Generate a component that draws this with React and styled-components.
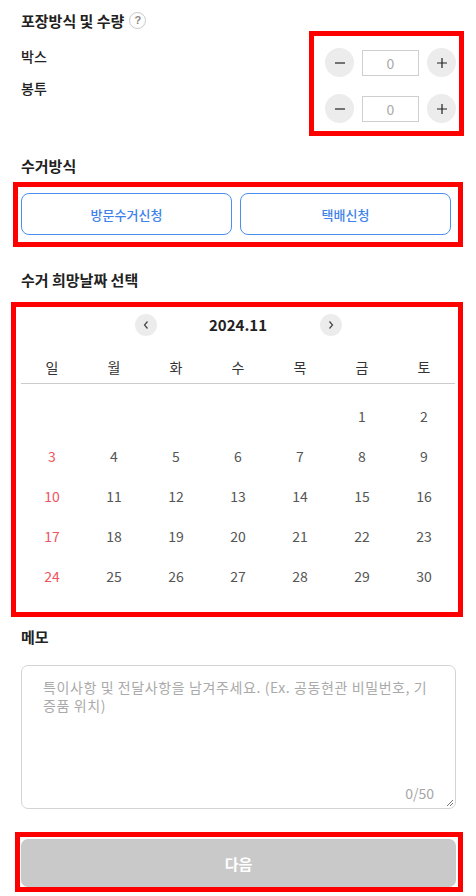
import styled, { createGlobalStyle } from 'styled-components';

const GlobalStyle = createGlobalStyle`
  * { box-sizing: border-box; }
  body {
    margin: 0;
    background: #fff;
    font-family: "Noto Sans CJK KR", "Noto Sans", sans-serif;
    color: #222;
  }
`;

const Page = styled.div`
  width: 476px;
  padding: 10px 20px 0 21px;
`;

const SectionTitle = styled.h3`
  margin: ${(p) => p.$top || 0}px 0 0;
  display: flex;
  align-items: center;
  font-size: 15px;
  font-weight: 700;
  line-height: 21px;
  color: #222;
`;

const HelpIcon = styled.span`
  display: inline-flex;
  align-items: center;
  justify-content: center;
  width: 17px;
  height: 17px;
  margin-left: 5px;
  border: 1px solid #c8c8c8;
  border-radius: 50%;
  font-size: 11px;
  font-weight: 700;
  color: #888;
  font-family: "Liberation Sans", sans-serif;
`;

// red annotation frame drawn around a block
const Highlight = styled.div`
  border: 5px solid #ff0000;
  margin: ${(p) => p.$margin};
  padding: ${(p) => p.$padding};
`;

const QuantityRow = styled.div`
  display: flex;
  justify-content: space-between;
  align-items: flex-start;
`;

const Labels = styled.div`
  display: flex;
  flex-direction: column;
  gap: 12px;
  margin-top: 15px;
`;

const Label = styled.span`
  font-size: 14px;
  font-weight: 500;
  line-height: 20px;
  color: #222;
`;

const Steppers = styled.div`
  display: flex;
  flex-direction: column;
  gap: 17px;
`;

const Stepper = styled.div`
  display: flex;
  align-items: center;
  gap: 8px;
`;

const RoundButton = styled.button`
  width: 29px;
  height: 29px;
  border: none;
  border-radius: 50%;
  background: #ececec;
  display: flex;
  align-items: center;
  justify-content: center;
  padding: 0;
  color: #222;
`;

const CountBox = styled.div`
  width: 57px;
  height: 26px;
  border: 1px solid #cfcfcf;
  display: flex;
  align-items: center;
  justify-content: center;
  font-size: 14px;
  color: #aaa;
`;

const MethodGroup = styled.div`
  display: grid;
  grid-template-columns: 1fr 1fr;
  gap: 8px;
`;

const MethodButton = styled.button`
  height: 42px;
  border: 1px solid #4a8fee;
  border-radius: 8px;
  background: #fff;
  color: #3e83ea;
  font-family: inherit;
  font-size: 13px;
  font-weight: 500;
`;

const CalendarHeader = styled.div`
  display: flex;
  justify-content: center;
  align-items: center;
`;

const NavButton = styled.button`
  width: 22px;
  height: 22px;
  border: none;
  border-radius: 50%;
  background: #ececec;
  display: flex;
  align-items: center;
  justify-content: center;
  padding: 0;
`;

const MonthTitle = styled.div`
  width: 163px;
  text-align: center;
  font-size: 15px;
  font-weight: 700;
  color: #222;
  line-height: 22px;
`;

const WeekRow = styled.div`
  display: grid;
  grid-template-columns: repeat(7, 62px);
  margin-top: 20px;
  padding-bottom: 5px;
  border-bottom: 1px solid #cccccc;
`;

const WeekDay = styled.div`
  text-align: center;
  font-size: 14px;
  line-height: 22px;
  color: #333;
`;

const DayGrid = styled.div`
  display: grid;
  grid-template-columns: repeat(7, 62px);
  grid-auto-rows: 40px;
  margin-top: 12px;
`;

const Day = styled.div`
  display: flex;
  align-items: center;
  justify-content: center;
  font-size: 14px;
  color: ${(p) => (p.$sunday ? '#f25360' : '#555')};
`;

const MemoBox = styled.div`
  position: relative;
  margin-top: 18px;
  height: 144px;
  border: 1px solid #d4d4d4;
  border-radius: 7px;
  padding: 12px 20px 0 21px;
`;

const Placeholder = styled.p`
  margin: 0;
  font-size: 14px;
  line-height: 18px;
  letter-spacing: 0.6px;
  color: #aaa;
`;

const Counter = styled.span`
  position: absolute;
  right: 21px;
  bottom: 5px;
  font-size: 14px;
  color: #a6a6a6;
`;

const ResizeHandle = styled.svg`
  position: absolute;
  right: 1px;
  bottom: 1px;
`;

const NextButton = styled.button`
  width: 100%;
  height: 48px;
  border: none;
  border-radius: 7px;
  background: #c9c9c9;
  color: #fff;
  font-family: inherit;
  font-size: 15px;
  font-weight: 700;
`;

const Minus = () => (
  <svg width="12" height="12" viewBox="0 0 12 12">
    <path d="M1 6h10" stroke="#222" strokeWidth="1.2" />
  </svg>
);

const Plus = () => (
  <svg width="12" height="12" viewBox="0 0 12 12">
    <path d="M1 6h10M6 1v10" stroke="#222" strokeWidth="1.2" />
  </svg>
);

const Chevron = ({ dir }) => (
  <svg width="8" height="10" viewBox="0 0 8 10">
    <path
      d={dir === 'left' ? 'M5.5 1.5L2.5 5l3 3.5' : 'M2.5 1.5L5.5 5l-3 3.5'}
      fill="none"
      stroke="#444"
      strokeWidth="1.2"
    />
  </svg>
);

const weekDays = ['일', '월', '화', '수', '목', '금', '토'];
// November 2024 starts on Friday
const days = [...Array(5).fill(null), ...Array.from({ length: 30 }, (_, i) => i + 1)];

export default function App() {
  return (
    <Page>
      <GlobalStyle />

      <SectionTitle>
        포장방식 및 수량<HelpIcon>?</HelpIcon>
      </SectionTitle>
      <QuantityRow>
        <Labels>
          <Label>박스</Label>
          <Label>봉투</Label>
        </Labels>
        <Highlight $margin="0 -8px 0 0" $padding="12px 3px 8px 11px">
          <Steppers>
            {[0, 1].map((i) => (
              <Stepper key={i}>
                <RoundButton><Minus /></RoundButton>
                <CountBox>0</CountBox>
                <RoundButton><Plus /></RoundButton>
              </Stepper>
            ))}
          </Steppers>
        </Highlight>
      </QuantityRow>

      <SectionTitle $top={19}>수거방식</SectionTitle>
      <Highlight $margin="6px -7px 0 -8px" $padding="6px 7px 7px 3px">
        <MethodGroup>
          <MethodButton>방문수거신청</MethodButton>
          <MethodButton>택배신청</MethodButton>
        </MethodGroup>
      </Highlight>

      <SectionTitle $top={22}>수거 희망날짜 선택</SectionTitle>
      <Highlight $margin="12px -7px 0 -10px" $padding="7px 3px 16px 5px">
        <CalendarHeader>
          <NavButton><Chevron dir="left" /></NavButton>
          <MonthTitle>2024.11</MonthTitle>
          <NavButton><Chevron dir="right" /></NavButton>
        </CalendarHeader>
        <WeekRow>
          {weekDays.map((d) => (
            <WeekDay key={d}>{d}</WeekDay>
          ))}
        </WeekRow>
        <DayGrid>
          {days.map((d, i) => (
            <Day key={i} $sunday={i % 7 === 0}>{d}</Day>
          ))}
        </DayGrid>
      </Highlight>

      <SectionTitle $top={9}>메모</SectionTitle>
      <MemoBox>
        <Placeholder>
          특이사항 및 전달사항을 남겨주세요. (Ex. 공동현관 비밀번호, 기증품 위치)
        </Placeholder>
        <Counter>0/50</Counter>
        <ResizeHandle width="10" height="10" viewBox="0 0 10 10">
          <path d="M9 3L3 9M9 6L6 9" stroke="#777" strokeWidth="1" />
        </ResizeHandle>
      </MemoBox>

      <Highlight $margin="23px -7px 0 -6px" $padding="2px 2px 0 1px">
        <NextButton>다음</NextButton>
      </Highlight>
    </Page>
  );
}
